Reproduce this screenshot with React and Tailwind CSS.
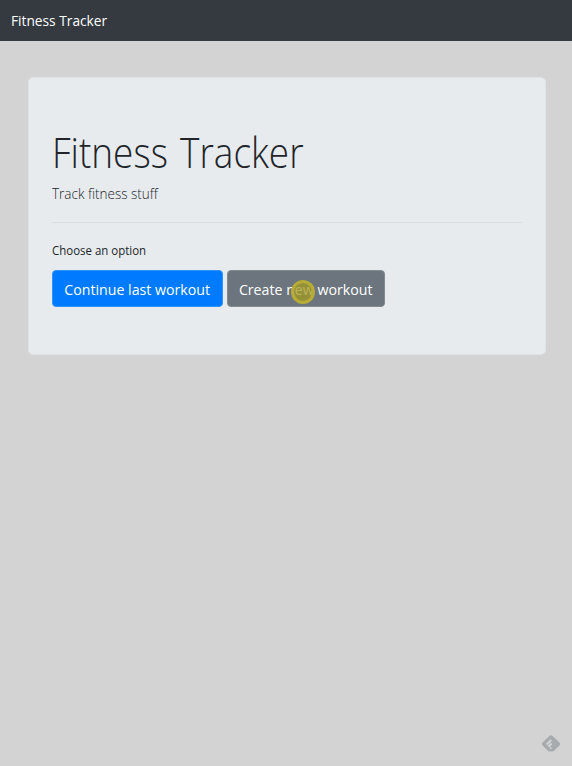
import React from "react";

function Navbar() {
  return (
    <header className="flex h-[41px] shrink-0 items-center bg-[#343a40] px-[11px] pb-[2px] text-white">
      <span className="origin-left scale-x-[0.915] whitespace-nowrap text-[15px] leading-5">Fitness Tracker</span>
    </header>
  );
}

function ClickMarker() {
  return (
    <span className="absolute left-[63px] top-[9px] size-6 rounded-full border-[3px] border-[#b9ae35]/90 bg-[#a39a20]/75" />
  );
}

function FeedlyMark() {
  return (
    <svg width="20" height="18" viewBox="0 0 20 18" fill="none" aria-hidden="true">
      <path
        d="M8.3 1 1.3 7.8a1.7 1.7 0 0 0 0 2.4l5.3 5.4q1 1 2.2 1h2.4q1.2 0 2.2-1l5.3-5.4a1.7 1.7 0 0 0 0-2.4L11.7 1a2.4 2.4 0 0 0-3.4 0Z"
        fill="#a8abae"
      />
      <path d="m5.6 9.6 4.7-4.7M7.4 11.7l3.3-3.3M9.2 13.8l1-1" stroke="#d3d3d3" strokeWidth="2.1" />
    </svg>
  );
}

export default function App() {
  return (
    <div className="flex h-[766px] w-[572px] flex-col overflow-hidden bg-[#d3d3d3] font-['Open_Sans','Noto_Sans',sans-serif] text-[#212529]">
      <Navbar />
      <main className="flex-1 px-7 pt-9">
        <section className="h-[278px] w-[518px] rounded-[5px] border border-[#e1e4e6] bg-[#e7ebee] px-[23px] pt-[47px]">
          <h1 className="h-[54px] origin-left scale-x-[0.88] whitespace-nowrap text-[42px] font-light leading-[54px] [word-spacing:3px]">
            Fitness Tracker
          </h1>
          <p className="mt-[2px] h-6 origin-left scale-x-[0.9] whitespace-nowrap text-[15px] font-light leading-6">
            Track fitness stuff
          </p>
          <hr className="mt-[17px] border-[#dcdfe2]" />
          <p className="mt-[18px] h-5 origin-left scale-x-[0.955] whitespace-nowrap text-[12px] leading-5">
            Choose an option
          </p>
          <div className="mt-[9px] flex gap-1">
            <button className="h-[37px] w-[171px] whitespace-nowrap rounded-[4px] border border-[#2f93fc] bg-[#007bff] pt-px text-[15px] text-white">
              <span className="-mx-2 inline-block scale-x-[0.945]">Continue last workout</span>
            </button>
            <button className="relative h-[37px] w-[158px] whitespace-nowrap rounded-[4px] border border-[#838b91] bg-[#6c757d] pt-px text-[15px] text-white">
              <span className="-mx-2 inline-block scale-x-[0.945]">Create new workout</span>
              <ClickMarker />
            </button>
          </div>
        </section>
      </main>
      <footer className="flex justify-end pb-[13px] pr-[11px]">
        <FeedlyMark />
      </footer>
    </div>
  );
}
